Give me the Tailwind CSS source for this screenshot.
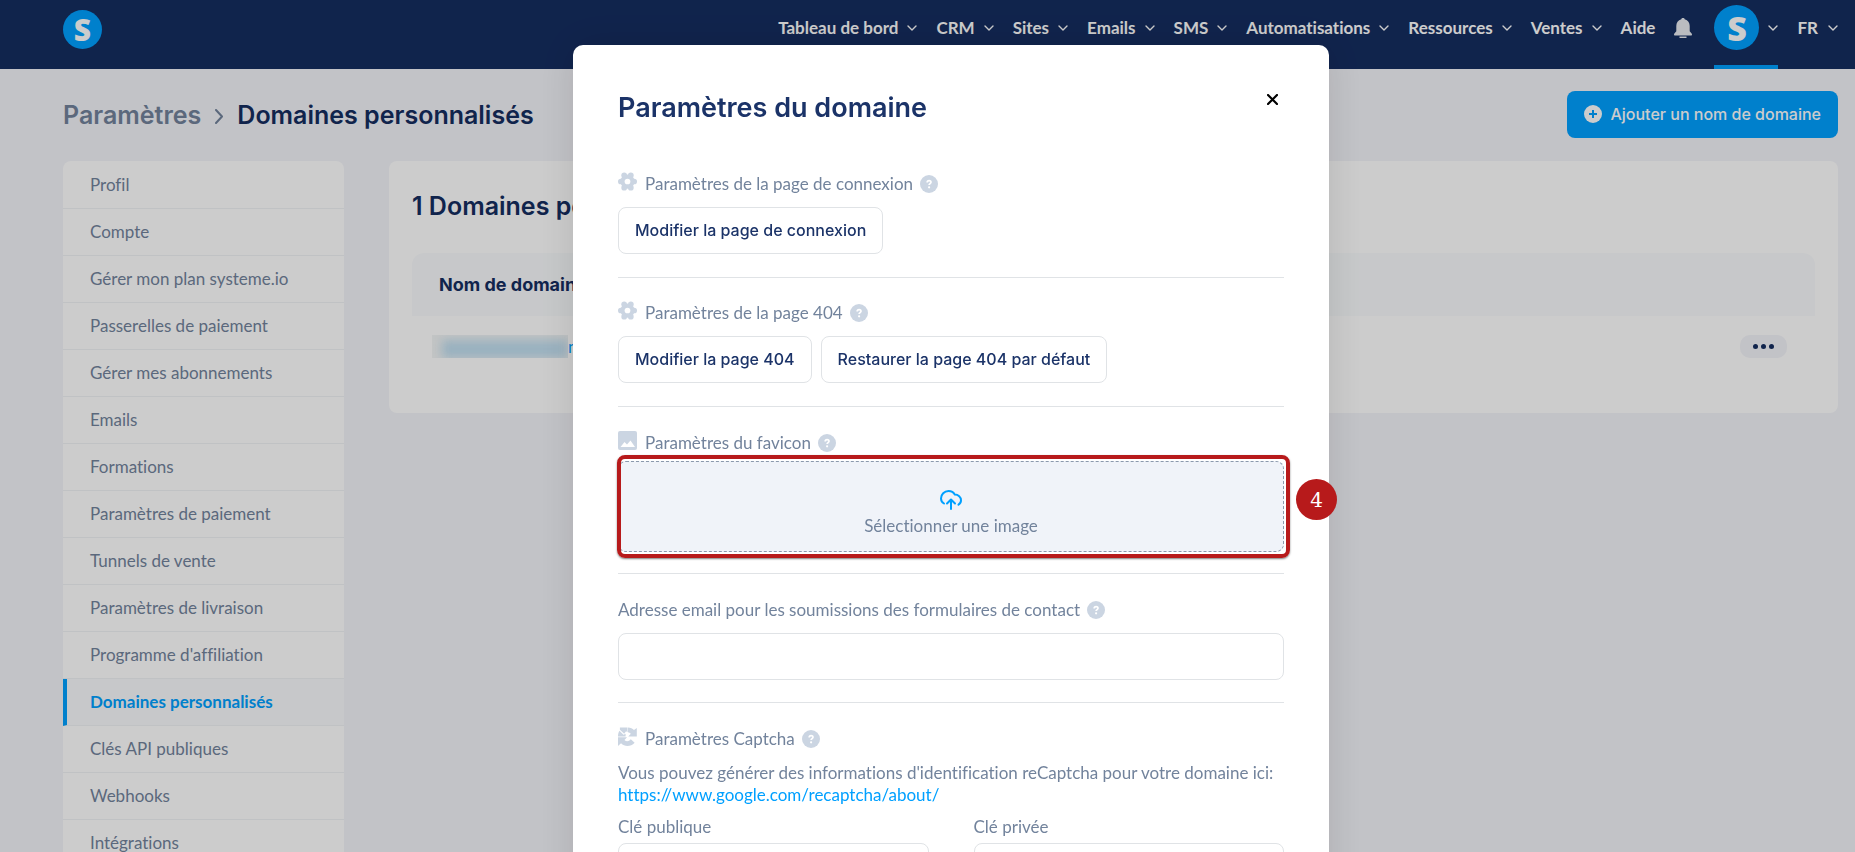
<!DOCTYPE html>
<html lang="fr">
<head>
    <meta charset="UTF-8">
    <meta name="viewport" content="width=device-width, initial-scale=1.0">
    <title>Domaines personnalisés</title>
    <script src="https://cdn.jsdelivr.net/npm/@tailwindcss/browser@4"></script>
</head>
<body class="bg-[#f3f4f9] h-screen overflow-hidden font-[Lato,sans-serif] text-[17px] text-[#72839c] [font-variant-ligatures:none]">

    <!-- Shared icons -->
    <svg class="hidden">
        <symbol id="chevron" viewBox="0 0 10 6"><path d="M1 1l4 4 4-4" fill="none" stroke="currentColor" stroke-width="1.4" stroke-linecap="round" stroke-linejoin="round"/></symbol>
        <symbol id="help" viewBox="0 0 18 18">
            <circle cx="9" cy="9" r="9" fill="#cbd5e2"/>
            <path d="M7.200 7.400c0-2.300 3.800-2.200 3.800-.2 0 1.400-1.900 1.400-1.900 2.900" fill="none" stroke="#fff" stroke-width="1.700"/>
            <circle cx="9.100" cy="12.300" r="1.100" fill="#fff"/>
        </symbol>
        <symbol id="gear" viewBox="0 0 20 20">
            <g fill="#cbd5e2">
                <circle cx="10" cy="10" r="7.500"/>
                <circle cx="17" cy="10" r="3"/><circle cx="3" cy="10" r="3"/>
                <circle cx="13.500" cy="3.500" r="3"/><circle cx="6.500" cy="3.500" r="3"/>
                <circle cx="13.500" cy="16.500" r="3"/><circle cx="6.500" cy="16.500" r="3"/>
            </g>
            <circle cx="10" cy="10" r="3" fill="#fff"/>
        </symbol>
    </svg>

    <div class="pl-[47px]">
        <!-- Top bar -->
        <header class="-ml-[47px] pl-[63px] pr-[17px] h-[69px] bg-[#152d60] flex justify-between text-white">
            <a href="#" aria-label="Accueil" class="mt-[10px] size-[39px] rounded-full bg-[#00a0ff] flex items-center justify-center font-['Noto_Sans'] text-[30px] font-black leading-none">S</a>
            <nav class="h-[56px] flex items-center gap-[19px] font-bold">
                <a href="#" class="flex items-center gap-[9px]">Tableau de bord <svg class="w-[10px] h-[6px]"><use href="#chevron"/></svg></a>
                <a href="#" class="flex items-center gap-[9px]">CRM <svg class="w-[10px] h-[6px]"><use href="#chevron"/></svg></a>
                <a href="#" class="flex items-center gap-[9px]">Sites <svg class="w-[10px] h-[6px]"><use href="#chevron"/></svg></a>
                <a href="#" class="flex items-center gap-[9px]">Emails <svg class="w-[10px] h-[6px]"><use href="#chevron"/></svg></a>
                <a href="#" class="flex items-center gap-[9px]">SMS <svg class="w-[10px] h-[6px]"><use href="#chevron"/></svg></a>
                <a href="#" class="flex items-center gap-[9px]">Automatisations <svg class="w-[10px] h-[6px]"><use href="#chevron"/></svg></a>
                <a href="#" class="flex items-center gap-[9px]">Ressources <svg class="w-[10px] h-[6px]"><use href="#chevron"/></svg></a>
                <a href="#" class="flex items-center gap-[9px]">Ventes <svg class="w-[10px] h-[6px]"><use href="#chevron"/></svg></a>
                <a href="#">Aide</a>
                <button type="button" aria-label="Notifications">
                    <svg class="w-[18px] h-[20px]" viewBox="0 0 18 20" fill="#e9ecf1"><path d="M9 0c1.100 0 1.500.6 1.700 1.200C14 2 15.700 4.600 15.700 8v5.200l2.100 2.600c.4.700.1 1.700-.8 1.700H1c-.9 0-1.200-1-.8-1.700l2.100-2.600V8C2.300 4.600 4 2 7.300 1.200 7.500.6 7.900 0 9 0zM5.500 18.500h7V20h-7z"/></svg>
                </button>
                <a href="#" aria-label="Mon compte" class="ml-[3px] self-start h-[69px] border-b-4 border-[#00a0ff] flex items-center gap-[9px] pb-[10px]">
                    <span class="size-[45px] rounded-full bg-[#00a0ff] flex items-center justify-center font-['Noto_Sans'] text-[34px] font-black leading-none">S</span>
                    <svg class="w-[10px] h-[6px]"><use href="#chevron"/></svg>
                </a>
                <a href="#" class="flex items-center gap-[10px]">FR <svg class="w-[10px] h-[6px]"><use href="#chevron"/></svg></a>
            </nav>
        </header>

        <main class="pl-4 pr-[17px]">
            <div class="h-[90px] mb-[2px] flex items-center justify-between">
                <h1 class="pt-1 flex items-center gap-[14px] font-[Inter] font-semibold text-[25px] text-[#152d60]">
                    <a href="#" class="text-[#72839c]">Paramètres</a>
                    <svg class="w-[8px] h-[15px]" viewBox="0 0 8 15" fill="none" stroke="#72839c" stroke-width="2" stroke-linecap="round" stroke-linejoin="round"><path d="M1 1l6 6.500L1 14"/></svg>
                    Domaines personnalisés
                </h1>
                <button type="button" class="h-[47px] px-[17px] rounded-lg bg-[#00a0ff] text-white font-[Inter] font-medium text-base flex items-center gap-2">
                    <svg class="size-[18px]" viewBox="0 0 18 18"><circle cx="9" cy="9" r="9" fill="#fff"/><path d="M9 5v8M5 9h8" stroke="#00a0ff" stroke-width="2"/></svg>
                    Ajouter un nom de domaine
                </button>
            </div>

            <div class="flex items-start gap-[45px]">
                <!-- Settings menu -->
                <aside class="w-[281px] shrink-0 bg-white rounded-lg overflow-hidden pt-px">
                    <ul class="divide-y divide-[#f1f3f5] leading-[46px]">
                        <li class="pl-[27px]"><a href="#">Profil</a></li>
                        <li class="pl-[27px]"><a href="#">Compte</a></li>
                        <li class="pl-[27px]"><a href="#">Gérer mon plan systeme.io</a></li>
                        <li class="pl-[27px]"><a href="#">Passerelles de paiement</a></li>
                        <li class="pl-[27px]"><a href="#">Gérer mes abonnements</a></li>
                        <li class="pl-[27px]"><a href="#">Emails</a></li>
                        <li class="pl-[27px]"><a href="#">Formations</a></li>
                        <li class="pl-[27px]"><a href="#">Paramètres de paiement</a></li>
                        <li class="pl-[27px]"><a href="#">Tunnels de vente</a></li>
                        <li class="pl-[27px]"><a href="#">Paramètres de livraison</a></li>
                        <li class="pl-[27px]"><a href="#">Programme d'affiliation</a></li>
                        <li class="pl-[23px] border-l-4 border-l-[#00a0ff] bg-[#f9fbfd]"><a href="#" class="font-bold text-[#00a0ff]">Domaines personnalisés</a></li>
                        <li class="pl-[27px]"><a href="#">Clés API publiques</a></li>
                        <li class="pl-[27px]"><a href="#">Webhooks</a></li>
                        <li class="pl-[27px]"><a href="#">Intégrations</a></li>
                    </ul>
                </aside>

                <!-- Domain list -->
                <section class="grow bg-white rounded-lg px-[23px] pb-9">
                    <h2 class="h-[92px] flex items-center font-[Inter] font-semibold text-[25px] text-[#152d60]">1 Domaines personnalisés</h2>
                    <table class="w-full">
                        <thead>
                            <tr class="h-[63px] text-left font-[Inter] text-lg text-[#152d60]">
                                <th class="pl-[27px] bg-[#f9fbfd] rounded-tl-xl font-bold">Nom de domaine</th>
                                <th class="bg-[#f9fbfd] rounded-tr-xl"></th>
                            </tr>
                        </thead>
                        <tbody>
                            <tr class="h-[61px]">
                                <td class="p-0 pl-[20px]">
                                    <div class="flex items-center">
                                        <span class="w-[136px] h-[23px] bg-[#f3f5f5] overflow-hidden flex items-end justify-end"><span class="w-[126px] h-[18px] bg-[#c0def0] blur-[5px]"></span></span>
                                        <a href="#" class="leading-5 text-[#00a0ff]">n</a>
                                    </div>
                                </td>
                                <td class="p-0 pr-[28px]">
                                    <button type="button" aria-label="Actions" class="ml-auto w-[47px] h-[23px] rounded-[10px] bg-[#f3f4f9] flex items-center justify-center gap-[3px]">
                                        <span class="size-[5px] rounded-full bg-[#152d60]"></span>
                                        <span class="size-[5px] rounded-full bg-[#152d60]"></span>
                                        <span class="size-[5px] rounded-full bg-[#152d60]"></span>
                                    </button>
                                </td>
                            </tr>
                        </tbody>
                    </table>
                </section>
            </div>
        </main>
    </div>

    <!-- Modal -->
    <div class="fixed inset-0 bg-black/20 overflow-hidden pl-[47px] pt-[45px] flex justify-center items-start">
        <div role="dialog" aria-labelledby="modalTitle" class="w-[756px] px-[45px] pb-12 bg-white rounded-[10px] shadow-[0_0_40px_rgba(0,0,0,0.12)]">
            <div class="h-[104px] pt-[43px] flex items-start justify-between">
                <h2 id="modalTitle" class="font-[Inter] font-semibold text-[27px] leading-10 text-[#1b3368]">Paramètres du domaine</h2>
                <button type="button" aria-label="Fermer" class="mt-[6px] mr-[6px]">
                    <svg class="size-[11px]" viewBox="0 0 11 11" stroke="#000" stroke-width="2.200" stroke-linecap="round"><path d="M1 1l9 9M10 1l-9 9"/></svg>
                </button>
            </div>

            <div class="divide-y divide-[#e0e3e6]">
                <section class="h-[129px] pt-6">
                    <div class="h-[22px] flex items-center">
                        <svg class="size-[19px] mr-2 mb-[6px]"><use href="#gear"/></svg>
                        Paramètres de la page de connexion
                        <svg class="size-[18px] ml-[7px]"><use href="#help"/></svg>
                    </div>
                    <button type="button" class="mt-3 h-[47px] px-4 pb-[2px] rounded-lg border border-[#e0e3e6] font-[Inter] font-medium text-base text-[#1b3368]">Modifier la page de connexion</button>
                </section>

                <section class="h-[129px] pt-6">
                    <div class="h-[22px] flex items-center">
                        <svg class="size-[19px] mr-2 mb-[6px]"><use href="#gear"/></svg>
                        Paramètres de la page 404
                        <svg class="size-[18px] ml-[7px]"><use href="#help"/></svg>
                    </div>
                    <div class="mt-3 flex gap-[9px]">
                        <button type="button" class="h-[47px] px-4 pb-[2px] rounded-lg border border-[#e0e3e6] font-[Inter] font-medium text-base text-[#1b3368]">Modifier la page 404</button>
                        <button type="button" class="h-[47px] px-4 pb-[2px] rounded-lg border border-[#e0e3e6] font-[Inter] font-medium text-base text-[#1b3368]">Restaurer la page 404 par défaut</button>
                    </div>
                </section>

                <section class="h-[167px] pt-[25px]">
                    <div class="h-[22px] flex items-center">
                        <svg class="size-[19px] mr-2 mb-[6px]" viewBox="0 0 19 19"><rect width="19" height="19" rx="2" fill="#cbd5e2"/><path d="M2.500 16l4-5 2.500 2.500 3.500-4 4.500 6.500z" fill="#fff"/></svg>
                        Paramètres du favicon
                        <svg class="size-[18px] ml-[7px]"><use href="#help"/></svg>
                    </div>
                    <div class="relative mt-[7px]">
                        <button type="button" class="w-full h-[91px] rounded-lg border border-dashed border-[#8b99ad] bg-[#f0f3f9] flex flex-col items-center justify-center gap-[3px] pt-[15px]">
                            <svg class="w-[22px] h-[20px]" viewBox="0 0 22 20" fill="none" stroke="#00a0ff" stroke-width="2" stroke-linecap="round" stroke-linejoin="round"><path d="M4 13.500C2.200 12.500 1 10.800 1 8.500 1 4.500 4.300 1 8.500 1c3 0 5.200 1.500 6.300 3.600C18.200 4.600 21 7 21 10.200c0 1.800-.9 3.500-2.500 4.500M11 19v-9M7 13.500l4-4 4 4"/></svg>
                            <span class="leading-[26px]">Sélectionner une image</span>
                        </button>
                        <!-- Step marker -->
                        <div class="absolute -left-px -right-[6px] -inset-y-[6px] rounded-lg border-4 border-[#b71a1b] shadow-[0_1px_2px_rgba(0,0,0,0.5)] pointer-events-none"></div>
                        <span class="absolute -right-[53px] top-[18px] size-[41px] rounded-full bg-[#b71a1b] text-white text-xl font-['DejaVu_Serif'] flex items-center justify-center">4</span>
                    </div>
                </section>

                <section class="h-[129px] pt-[25px]">
                    <div class="h-[22px] flex items-center">
                        <label for="contactEmail">Adresse email pour les soumissions des formulaires de contact</label>
                        <svg class="size-[18px] ml-[7px]"><use href="#help"/></svg>
                    </div>
                    <input type="email" id="contactEmail" class="mt-3 w-full h-[47px] px-4 rounded-lg border border-[#e0e3e6]">
                </section>

                <section class="pt-[25px]">
                    <div class="h-[22px] flex items-center">
                        <svg class="size-[19px] mr-2 mb-[6px]" viewBox="0 0 20 20" fill="#cbd5e2"><path d="M2 .5h8v5L8.500 4.500 6.500 7 2 3zM10.500.5c2.800 0 4.800 1 6.300 2.700L19.800 1v9h-9l2.700-3c-.8-1-1.800-1.500-3-1.600zM1.500 4l4.300 4.200L8 7v3H0C0 7.500.5 5.500 1.500 4zM0 10.800h9.500l-2.700 2.900c2 2 4.700 1.700 6.700-.7l4 3.500C13.500 21 7 21 3.200 17.200L0 20z"/></svg>
                        Paramètres Captcha
                        <svg class="size-[18px] ml-[7px]"><use href="#help"/></svg>
                    </div>
                    <p class="mt-3 leading-[22px]">Vous pouvez générer des informations d'identification reCaptcha pour votre domaine ici:<br>
                        <a href="https://www.google.com/recaptcha/about/" class="text-[#00a0ff]">https://www.google.com/recaptcha/about/</a>
                    </p>
                    <div class="mt-[10px] grid grid-cols-2 gap-[45px]">
                        <div>
                            <label for="publicKey" class="block leading-[22px]">Clé publique</label>
                            <input type="text" id="publicKey" class="mt-[5px] w-full h-[47px] px-4 rounded-lg border border-[#e0e3e6]">
                        </div>
                        <div>
                            <label for="privateKey" class="block leading-[22px]">Clé privée</label>
                            <input type="text" id="privateKey" class="mt-[5px] w-full h-[47px] px-4 rounded-lg border border-[#e0e3e6]">
                        </div>
                    </div>
                </section>
            </div>
        </div>
    </div>

</body>
</html>
